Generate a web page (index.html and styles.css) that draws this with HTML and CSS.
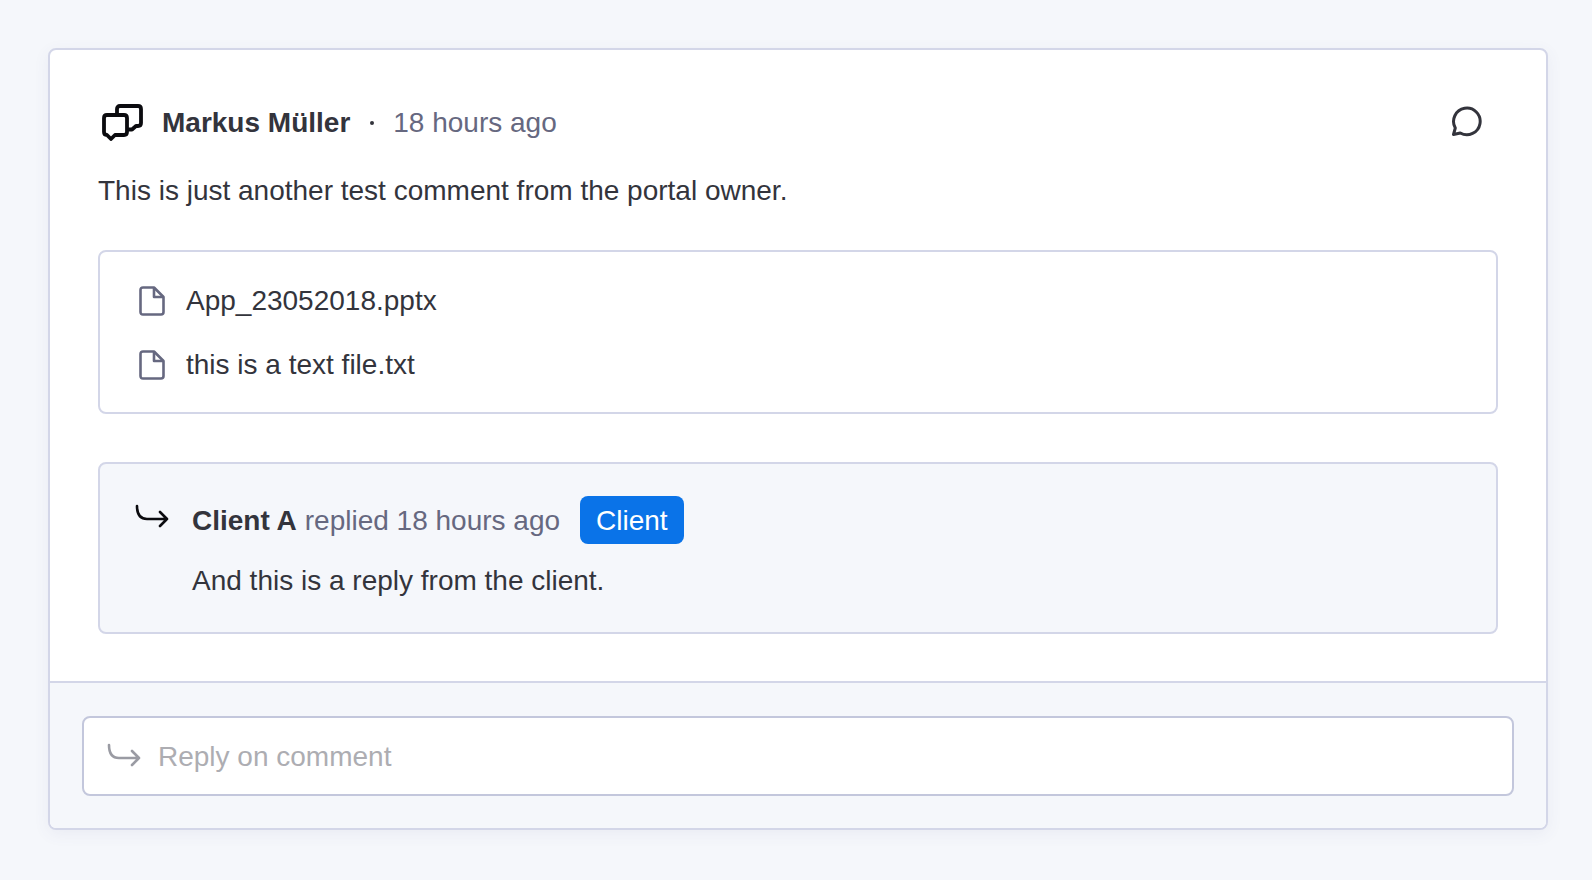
FILE: index.html
```html
<!DOCTYPE html>
<html>
<head>
    <title>Comment</title>
    <meta charset="UTF-8">
    <link rel="stylesheet" href="styles.css">
</head>
<body>
    <div class="card">
        <div class="card-body">
            <div class="comment-head">
                <svg class="icon-chats" viewBox="0 0 44 38" fill="none" stroke="#0b0b0f" stroke-width="3.8" stroke-linejoin="round" stroke-linecap="round">
                    <path d="M7 12h17q3 0 3 3v14q0 3-3 3h-9l-4 4-4-4H7q-3 0-3-3V15q0-3 3-3z"/>
                    <path d="M17 11V6q0-3 3-3h18q3 0 3 3v14q0 3-3 3h-2l-4 3.500-3 0"/>
                </svg>
                <span class="author">Markus Müller</span>
                <span class="dot"></span>
                <span class="time">18 hours ago</span>
                <svg class="icon-reply" viewBox="0 0 32 32" fill="none" stroke="#33343c" stroke-width="3" stroke-linejoin="round" stroke-linecap="round">
                    <path d="M2.500 29.500l1.800-6.500a13.300 13.300 0 1 1 5 5z"/>
                </svg>
            </div>
            <p class="comment-text">This is just another test comment from the portal owner.</p>

            <div class="files">
                <div class="file">
                    <svg class="icon-file" viewBox="0 0 26 30" fill="none" stroke="#666880" stroke-width="2.6" stroke-linejoin="round">
                        <path d="M4 1.5h11l9.5 9.5v15q0 2.500-2.500 2.500H4q-2.500 0-2.500-2.500V4q0-2.500 2.500-2.500z"/>
                        <path d="M15 1.500v9.500h9.500"/>
                    </svg>
                    <span>App_23052018.pptx</span>
                </div>
                <div class="file">
                    <svg class="icon-file" viewBox="0 0 26 30" fill="none" stroke="#666880" stroke-width="2.6" stroke-linejoin="round">
                        <path d="M4 1.5h11l9.5 9.5v15q0 2.500-2.500 2.500H4q-2.500 0-2.500-2.500V4q0-2.500 2.500-2.500z"/>
                        <path d="M15 1.500v9.500h9.500"/>
                    </svg>
                    <span>this is a text file.txt</span>
                </div>
            </div>

            <div class="reply">
                <svg class="icon-arrow" viewBox="0 0 34 26" fill="none" stroke="#0b0b0f" stroke-width="2.6" stroke-linejoin="round" stroke-linecap="round">
                    <path d="M2 2q0 13 10 13h20M25 8l7 7-7 7"/>
                </svg>
                <div class="reply-main">
                    <div class="reply-head">
                        <span class="author">Client A</span>
                        <span class="time replied">replied 18 hours ago</span>
                        <span class="badge">Client</span>
                    </div>
                    <p class="reply-text">And this is a reply from the client.</p>
                </div>
            </div>
        </div>

        <div class="card-foot">
            <div class="reply-input">
                <svg class="icon-arrow" viewBox="0 0 34 26" fill="none" stroke="#9a9ba3" stroke-width="2.6" stroke-linejoin="round" stroke-linecap="round">
                    <path d="M2 2q0 13 10 13h20M25 8l7 7-7 7"/>
                </svg>
                <span class="placeholder">Reply on comment</span>
            </div>
        </div>
    </div>
</body>
</html>
```

FILE: styles.css
```css
* { box-sizing: border-box; }
html, body { height: 100%; }
body { margin: 0; padding: 48px 44px 0 48px; background: #f5f7fb; font-family: "Liberation Sans", Arial, sans-serif; font-size: 28px; color: #33343c; overflow: hidden; }
p { margin: 0; }
svg { display: block; flex: none; }

.card { height: 782px; background: #fff; border: 2px solid #d3d6e8; border-radius: 8px; box-shadow: 0 4px 16px rgba(80, 90, 140, 0.07); display: flex; flex-direction: column; }
.card-body { flex: 1; padding: 50px 48px 0 48px; }
.card-foot { height: 147px; padding: 33px 32px; background: #f5f7fb; border-top: 2px solid #d3d6e8; border-radius: 0 0 6px 6px; }

.comment-head { height: 46px; display: flex; align-items: center; padding-left: 2px; }
.icon-chats { width: 44px; height: 38px; margin: 0 18px 2px 0; }
.author { font-weight: bold; }
.dot { width: 4px; height: 4px; margin: 0 19px 0 20px; background: #33343c; border-radius: 50%; }
.time { color: #666880; }
.icon-reply { width: 32px; height: 32px; margin: 0 15px 5px auto; }
.comment-text { margin-top: 25px; line-height: 40px; }

.files { height: 164px; margin-top: 39px; padding: 17px 0 14px 39px; border: 2px solid #d3d6e8; border-radius: 8px; }
.file { height: 64px; display: flex; align-items: center; }
.icon-file { width: 26px; height: 30px; margin-right: 21px; }

.reply { height: 172px; margin-top: 48px; padding: 32px 0 0 35px; background: #f5f7fb; border: 2px solid #d3d6e8; border-radius: 8px; display: flex; }
.icon-arrow { width: 34px; height: 26px; }
.reply .icon-arrow { margin: 8px 23px 0 0; }
.reply-head { display: flex; align-items: center; height: 50px; }
.replied { margin-left: 8px; }
.badge { margin: -2px 0 0 20px; height: 48px; padding: 0 16px; line-height: 50px; background: #0a73e8; color: #fff; border-radius: 8px; }
.reply-text { margin-top: 15px; line-height: 40px; }

.reply-input { height: 80px; padding-left: 23px; background: #fff; border: 2px solid #c3c7dc; border-radius: 8px; display: flex; align-items: center; }
.reply-input .icon-arrow { margin: 0 17px 0 0; }
.placeholder { padding-top: 2px; color: #adadb2; }
```
